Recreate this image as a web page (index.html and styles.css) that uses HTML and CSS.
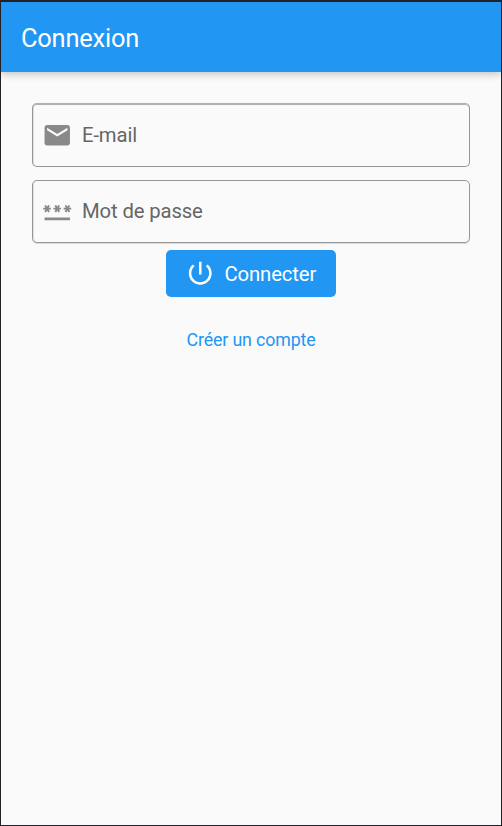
FILE: index.html
```html
<!DOCTYPE html>
<html lang="fr">
<head>
<meta charset="utf-8">
<title>Connexion</title>
<link rel="stylesheet" href="styles.css">
</head>
<body>
<div class="screen">
  <header class="app-bar"><h1 class="title">Connexion</h1></header>
  <main class="form">
    <div class="field field-email">
      <svg class="icon" viewBox="0 0 24 24"><path d="M20 4H4c-1.100 0-1.990.9-1.990 2L2 18c0 1.100.9 2 2 2h16c1.100 0 2-.9 2-2V6c0-1.100-.9-2-2-2zm0 4l-8 5-8-5V6l8 5 8-5v2z"/></svg>
      <span class="label">E-mail</span>
    </div>
    <div class="field field-password">
      <svg class="icon" viewBox="0 0 24 24"><path d="M2 17h20v2H2v-2zm1.150-4.050L4 11.470l.85 1.480 1.300-.75-.85-1.480H7v-1.500H5.300l.85-1.470L4.850 7 4 8.470 3.150 7l-1.300.75.85 1.470H1v1.500h1.700l-.85 1.480 1.300.75zm6.700-.75l1.300.75.85-1.480.85 1.480 1.300-.75-.85-1.480H15v-1.500h-1.700l.85-1.470-1.300-.75L12 8.470 11.150 7l-1.300.75.85 1.470H9v1.500h1.700l-.85 1.480zM23 9.220h-1.700l.85-1.470-1.300-.75L20 8.470 19.150 7l-1.300.75.85 1.470H17v1.500h1.700l-.85 1.480 1.300.75.85-1.480.85 1.480 1.300-.75-.85-1.480H23v-1.500z"/></svg>
      <span class="label">Mot de passe</span>
    </div>
    <button class="submit" type="button">
      <svg class="icon" viewBox="0 0 24 24"><path d="M13 3h-2v10h2V3zm4.830 2.170l-1.420 1.420C17.990 7.860 19 9.810 19 12c0 3.870-3.130 7-7 7s-7-3.130-7-7c0-2.190 1.010-4.140 2.580-5.420L6.170 5.170C4.230 6.820 3 9.260 3 12c0 4.970 4.030 9 9 9s9-4.030 9-9c0-2.740-1.230-5.180-3.170-6.830z"/></svg>
      <span class="submit-text">Connecter</span>
    </button>
    <a class="register">Créer un compte</a>
  </main>
</div>
</body>
</html>
```
FILE: styles.css
```css
* { box-sizing: border-box; }
body { margin: 0; font-family: Roboto, sans-serif; }
.screen {
  height: 826px;
  border: 1px solid #212125;
  border-top-width: 2px;
  background: #fafafa;
  overflow: hidden;
}
.app-bar {
  display: flex;
  align-items: center;
  height: 70px;
  padding-left: 20px;
  background: #2196f3;
  box-shadow: 0 2px 7px rgba(0, 0, 0, .16), 0 4px 8px rgba(0, 0, 0, .06);
}
.title {
  margin: 2px 0 0;
  color: #fff;
  font-size: 25.4px;
  line-height: 30px;
  font-weight: 400;
  letter-spacing: -.2px;
}
.form {
  display: flex;
  flex-direction: column;
  align-items: center;
  padding: 31px 31px 0;
}
.field {
  display: flex;
  align-items: center;
  width: 438px;
  height: 64px;
  margin-bottom: 13px;
  padding-left: 9.300px;
  border: 1px solid #969696;
  border-radius: 5px;
  box-shadow: inset 0 0 0 1px rgba(0, 0, 0, .07);
}
.field-email {
  border-top-color: #b0b0b0;
  box-shadow: inset 0 1px #b0b0b0, inset 1px 0 rgba(0, 0, 0, .1);
}
.field-password {
  height: 63px;
  margin-bottom: 7px;
  box-shadow: inset 1px 0 rgba(0, 0, 0, .1), 0 1px rgba(0, 0, 0, .12);
}
.field-password .label { padding-bottom: 1px; }
.icon {
  flex: none;
  width: 30.500px;
  height: 30.500px;
  fill: #898989;
}
.label {
  margin-left: 9.200px;
  color: #666;
  font-size: 20.300px;
  line-height: 24px;
  letter-spacing: -.13px;
}
.submit {
  display: flex;
  align-items: center;
  width: 170px;
  height: 47px;
  padding: 0 0 0 18.500px;
  border: 0;
  border-radius: 5px;
  background: #2196f3;
  color: #fff;
  font-family: inherit;
}
.submit .icon { fill: #fff; }
.submit-text {
  margin-left: 9.500px;
  font-size: 20.300px;
  line-height: 24px;
  letter-spacing: -.13px;
}
.register {
  margin-top: 32px;
  color: #2196f3;
  font-size: 17.800px;
  line-height: 22px;
  letter-spacing: -.13px;
}
```
